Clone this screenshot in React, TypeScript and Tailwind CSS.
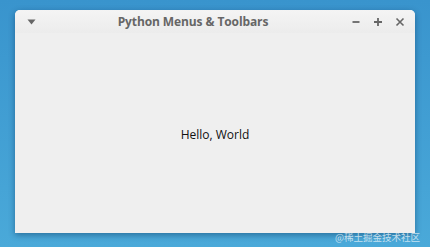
export default function App() {
  return (
    <div className="relative w-[430px] h-[247px] overflow-hidden bg-gradient-to-b from-[#3994cd] to-[#4aa9d9] pt-[10px] pl-[15px]">
      <div className="w-[400px] h-[223px] flex flex-col rounded-t-[5px] bg-[#efefef] shadow-[0_2px_6px_rgba(0,40,80,0.45)]">
        <div className="h-[23px] flex items-center rounded-t-[5px] bg-gradient-to-b from-[#f4f4f4] to-[#ececec] font-['Open_Sans',sans-serif] text-[#666]">
          <div className="w-[30px] flex justify-center pl-[2px]">
            <svg width="9" height="6" viewBox="0 0 9 6">
              <path d="M0.5 0.5 L8.5 0.5 L4.5 5.5 Z" fill="#666" />
            </svg>
          </div>
          <div className="flex-1 text-center text-[12px] font-bold pr-[10px] tracking-[-0.1px]">Python Menus &amp; Toolbars</div>
          <div className="flex items-center gap-[12px] pr-[10px]">
            <svg width="10" height="10" viewBox="0 0 10 10">
              <path d="M1.5 5 H8.5" stroke="#666" strokeWidth="1.8" />
            </svg>
            <svg width="10" height="10" viewBox="0 0 10 10">
              <path d="M1 5 H9 M5 1 V9" stroke="#666" strokeWidth="1.8" />
            </svg>
            <svg width="10" height="10" viewBox="0 0 10 10">
              <path d="M1.5 1.5 L8.5 8.5 M8.5 1.5 L1.5 8.5" stroke="#666" strokeWidth="1.6" />
            </svg>
          </div>
        </div>
        <div className="flex-1 flex items-center justify-center pt-[3px] font-['Open_Sans',sans-serif] text-[12px] text-[#111]">
          Hello, World
        </div>
      </div>
      <div className="absolute right-[10px] bottom-[5px] text-[9.5px] leading-none text-white/70 font-['Noto_Sans_CJK_SC',sans-serif]">
        @稀土掘金技术社区
      </div>
    </div>
  )
}
